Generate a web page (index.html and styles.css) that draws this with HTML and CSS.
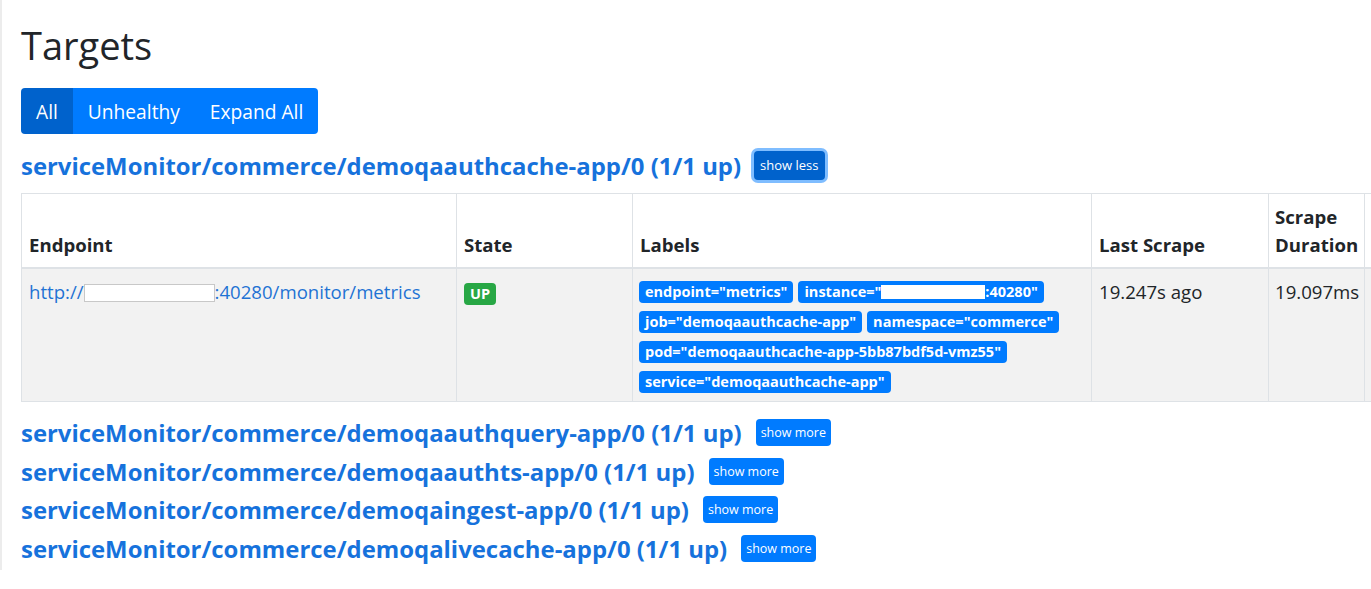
FILE: index.html
```html
<!DOCTYPE html>
<html>
<head>
<meta charset="utf-8">
<title>Targets</title>
<link rel="stylesheet" href="styles.css">
</head>
<body>
<div class="page">
  <h1 class="title">Targets</h1>
  <div class="btn-group">
    <button class="btn active">All</button>
    <button class="btn">Unhealthy</button>
    <button class="btn">Expand All</button>
  </div>

  <div class="pools">
    <div class="pool expanded">
      <div class="pool-head">
        <a class="pool-title" href="#">serviceMonitor/commerce/demoqaauthcache-app/0 (1/1 up)</a>
        <button class="btn-sm focused">show less</button>
      </div>
      <div class="table-wrap">
        <table class="targets">
          <colgroup>
            <col class="c-endpoint"><col class="c-state"><col class="c-labels"><col class="c-last"><col class="c-dur"><col class="c-err">
          </colgroup>
          <thead>
            <tr>
              <th>Endpoint</th>
              <th>State</th>
              <th>Labels</th>
              <th>Last Scrape</th>
              <th class="dur">Scrape Duration</th>
              <th></th>
            </tr>
          </thead>
          <tbody>
            <tr>
              <td><a class="endpoint" href="#">http://<span class="redact-link"></span>:40280/monitor/metrics</a></td>
              <td><span class="badge up">UP</span></td>
              <td class="labels-cell">
                <div class="labels">
                  <span class="badge label">endpoint="metrics"</span>
                  <span class="badge label">instance="<span class="redact-badge"></span>:40280"</span>
                  <span class="badge label">job="demoqaauthcache-app"</span>
                  <span class="badge label">namespace="commerce"</span>
                  <span class="badge label">pod="demoqaauthcache-app-5bb87bdf5d-vmz55"</span>
                  <span class="badge label">service="demoqaauthcache-app"</span>
                </div>
              </td>
              <td>19.247s ago</td>
              <td class="dur">19.097ms</td>
              <td></td>
            </tr>
          </tbody>
        </table>
      </div>
    </div>

    <div class="pool">
      <div class="pool-head">
        <a class="pool-title" href="#">serviceMonitor/commerce/demoqaauthquery-app/0 (1/1 up)</a>
        <button class="btn-sm">show more</button>
      </div>
    </div>
    <div class="pool">
      <div class="pool-head">
        <a class="pool-title" href="#">serviceMonitor/commerce/demoqaauthts-app/0 (1/1 up)</a>
        <button class="btn-sm">show more</button>
      </div>
    </div>
    <div class="pool">
      <div class="pool-head">
        <a class="pool-title" href="#">serviceMonitor/commerce/demoqaingest-app/0 (1/1 up)</a>
        <button class="btn-sm">show more</button>
      </div>
    </div>
    <div class="pool last">
      <div class="pool-head">
        <a class="pool-title" href="#">serviceMonitor/commerce/demoqalivecache-app/0 (1/1 up)</a>
        <button class="btn-sm">show more</button>
      </div>
    </div>
  </div>
</div>
</body>
</html>
```

FILE: styles.css
```css
* { box-sizing: border-box; }

html, body {
  margin: 0;
  padding: 0;
  background: #fff;
  overflow: hidden;
}

body {
  font-family: "Open Sans", "Noto Sans", sans-serif;
  color: #212529;
}

.page {
  border-left: 2px solid #ececec;
  padding: 0 0 0 19px;
  height: 570px;
  overflow: hidden;
}

.title {
  margin: 0;
  padding-top: 21px;
  font-size: 38px;
  line-height: 48px;
  font-weight: 500;
  color: #212529;
}

.btn-group {
  display: inline-flex;
  margin-top: 19px;
  border-radius: 4px;
  overflow: hidden;
}

.btn {
  font-family: inherit;
  border: 0;
  height: 46px;
  padding: 0 15px;
  font-size: 19.2px;
  color: #fff;
  background: #007bff;
  cursor: pointer;
}

.btn.active {
  background: #0062cc;
}

.pools {
  margin-top: 16px;
}

.pool-head {
  display: flex;
  align-items: center;
  height: 31px;
  margin-bottom: 7.7px;
  white-space: nowrap;
}

.pool.expanded .pool-head {
  margin-bottom: 12px;
}

.pool.last .pool-head {
  margin-bottom: 0;
}

.pool-title {
  color: #1672dc;
  text-decoration: none;
  font-weight: 700;
  font-size: 23.9px;
  line-height: 31px;
}

.btn-sm {
  font-family: inherit;
  margin-left: 14px;
  border: 0;
  border-radius: 4px;
  background: #007bff;
  color: #fff;
  font-size: 12.5px;
  height: 27px;
  padding: 0 5px;
  line-height: 27px;
}

.btn-sm.focused {
  background: #0062cc;
  height: 29px;
  padding: 0 6px;
  font-size: 13px;
  box-shadow: 0 0 0 3px rgba(0, 123, 255, 0.5);
  margin-left: 13px;
}

.table-wrap {
  margin-bottom: 15px;
  width: 1360px;
}

.targets {
  border-collapse: collapse;
  table-layout: fixed;
  width: 1450px;
  font-size: 18.6px;
}

.c-endpoint { width: 435px; }
.c-state { width: 176px; }
.c-labels { width: 459px; }
.c-last { width: 177px; }
.c-dur { width: 96px; }
.c-err { width: 107px; }

.targets th,
.targets td {
  border: 1px solid #dee2e6;
  padding: 9px 7px 8px;
  line-height: 28px;
  text-align: left;
}

.targets .dur {
  padding-left: 6px;
  padding-right: 4px;
}

.targets th {
  vertical-align: bottom;
  font-weight: 700;
  border-bottom: 2px solid #dee2e6;
  background: #fff;
  color: #212529;
}

.targets td {
  vertical-align: top;
  background: #f2f2f2;
  height: 133px;
}

.endpoint {
  color: #1f73d4;
  text-decoration: none;
  white-space: nowrap;
}

.redact-link {
  display: inline-block;
  width: 131px;
  height: 18px;
  background: #fff;
  border: 1px solid #c8c8c8;
  vertical-align: -3px;
}

.badge {
  display: inline-flex;
  align-items: center;
  height: 22px;
  padding: 0 6px;
  border-radius: 4px;
  font-size: 14.5px;
  font-weight: 700;
  color: #fff;
  line-height: 22px;
  white-space: nowrap;
}

.badge.up {
  background: #28a745;
  vertical-align: middle;
}

.badge.label {
  background: #007bff;
}

.labels-cell {
  padding-left: 6px !important;
}

.labels {
  display: flex;
  flex-wrap: wrap;
  gap: 8px 5px;
  margin-top: 3px;
}

.redact-badge {
  display: inline-block;
  width: 104px;
  height: 14px;
  background: #fff;
}
```
